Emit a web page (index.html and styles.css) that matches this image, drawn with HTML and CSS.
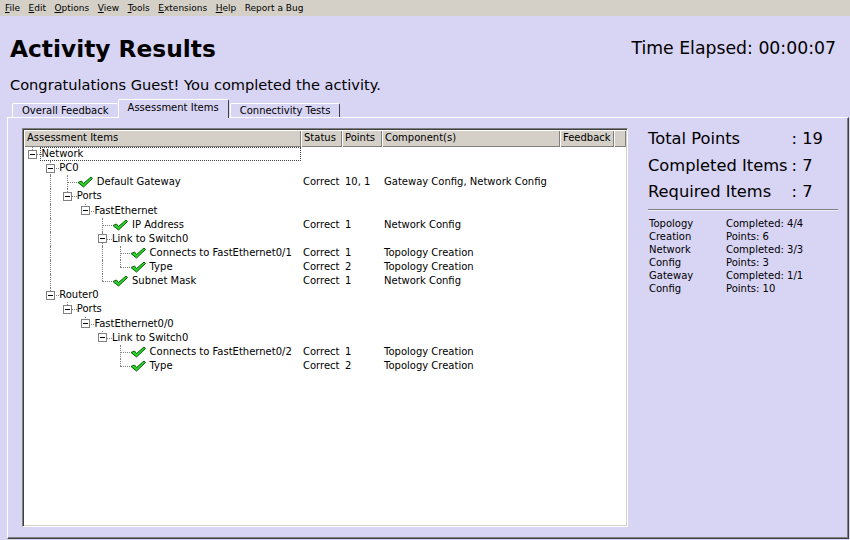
FILE: index.html
```html
<!DOCTYPE html>
<html>
<head>
<meta charset="utf-8">
<link rel="stylesheet" href="styles.css">
</head>
<body>
<div class="menubar">
  <span><u>F</u>ile</span>
  <span><u>E</u>dit</span>
  <span><u>O</u>ptions</span>
  <span><u>V</u>iew</span>
  <span><u>T</u>ools</span>
  <span><u>E</u>xtensions</span>
  <span><u>H</u>elp</span>
  <span>Report a Bug</span>
</div>

<div class="header">
  <div class="head-left">
    <h1 class="title">Activity Results</h1>
    <p class="congrats">Congratulations Guest! You completed the activity.</p>
  </div>
  <div class="time">Time Elapsed: 00:00:07</div>
</div>

<div class="tabs">
  <div class="tab">Overall Feedback</div>
  <div class="tab active">Assessment Items</div>
  <div class="tab">Connectivity Tests</div>
</div>

<div class="panel">
  <div class="tree">
    <div class="grid hd">
      <div>Assessment Items</div>
      <div>Status</div>
      <div>Points</div>
      <div>Component(s)</div>
      <div>Feedback</div>
      <div></div>
    </div>

    <div class="grid row">
      <div class="c1"><span class="g ell"><i class="box"></i></span><span class="lbl focus">Network</span></div>
      <div></div><div></div><div></div><div></div><div></div>
    </div>
    <div class="grid row">
      <div class="c1"><span class="g"></span><span class="g tee"><i class="box"></i></span><span class="lbl">PC0</span></div>
      <div></div><div></div><div></div><div></div><div></div>
    </div>
    <div class="grid row">
      <div class="c1"><span class="g"></span><span class="g pipe"></span><span class="g tee"></span><svg class="chk" viewBox="0 0 16 12"><path d="M1 6.5 L4.5 5 L6.5 7.5 L14 1 L15.5 2.5 L6.5 11 Z"/></svg><span class="lbl">Default Gateway</span></div>
      <div class="d">Correct</div><div class="d p">10, 1</div><div class="d">Gateway Config, Network Config</div><div></div><div></div>
    </div>
    <div class="grid row">
      <div class="c1"><span class="g"></span><span class="g pipe"></span><span class="g ell"><i class="box"></i></span><span class="lbl">Ports</span></div>
      <div></div><div></div><div></div><div></div><div></div>
    </div>
    <div class="grid row">
      <div class="c1"><span class="g"></span><span class="g pipe"></span><span class="g"></span><span class="g ell"><i class="box"></i></span><span class="lbl">FastEthernet</span></div>
      <div></div><div></div><div></div><div></div><div></div>
    </div>
    <div class="grid row">
      <div class="c1"><span class="g"></span><span class="g pipe"></span><span class="g"></span><span class="g"></span><span class="g tee"></span><svg class="chk" viewBox="0 0 16 12"><path d="M1 6.5 L4.5 5 L6.5 7.5 L14 1 L15.5 2.5 L6.5 11 Z"/></svg><span class="lbl">IP Address</span></div>
      <div class="d">Correct</div><div class="d p">1</div><div class="d">Network Config</div><div></div><div></div>
    </div>
    <div class="grid row">
      <div class="c1"><span class="g"></span><span class="g pipe"></span><span class="g"></span><span class="g"></span><span class="g tee"><i class="box"></i></span><span class="lbl">Link to Switch0</span></div>
      <div></div><div></div><div></div><div></div><div></div>
    </div>
    <div class="grid row">
      <div class="c1"><span class="g"></span><span class="g pipe"></span><span class="g"></span><span class="g"></span><span class="g pipe"></span><span class="g tee"></span><svg class="chk" viewBox="0 0 16 12"><path d="M1 6.5 L4.5 5 L6.5 7.5 L14 1 L15.5 2.5 L6.5 11 Z"/></svg><span class="lbl">Connects to FastEthernet0/1</span></div>
      <div class="d">Correct</div><div class="d p">1</div><div class="d">Topology Creation</div><div></div><div></div>
    </div>
    <div class="grid row">
      <div class="c1"><span class="g"></span><span class="g pipe"></span><span class="g"></span><span class="g"></span><span class="g pipe"></span><span class="g ell"></span><svg class="chk" viewBox="0 0 16 12"><path d="M1 6.5 L4.5 5 L6.5 7.5 L14 1 L15.5 2.5 L6.5 11 Z"/></svg><span class="lbl">Type</span></div>
      <div class="d">Correct</div><div class="d p">2</div><div class="d">Topology Creation</div><div></div><div></div>
    </div>
    <div class="grid row">
      <div class="c1"><span class="g"></span><span class="g pipe"></span><span class="g"></span><span class="g"></span><span class="g ell"></span><svg class="chk" viewBox="0 0 16 12"><path d="M1 6.5 L4.5 5 L6.5 7.5 L14 1 L15.5 2.5 L6.5 11 Z"/></svg><span class="lbl">Subnet Mask</span></div>
      <div class="d">Correct</div><div class="d p">1</div><div class="d">Network Config</div><div></div><div></div>
    </div>
    <div class="grid row">
      <div class="c1"><span class="g"></span><span class="g ell"><i class="box"></i></span><span class="lbl">Router0</span></div>
      <div></div><div></div><div></div><div></div><div></div>
    </div>
    <div class="grid row">
      <div class="c1"><span class="g"></span><span class="g"></span><span class="g ell"><i class="box"></i></span><span class="lbl">Ports</span></div>
      <div></div><div></div><div></div><div></div><div></div>
    </div>
    <div class="grid row">
      <div class="c1"><span class="g"></span><span class="g"></span><span class="g"></span><span class="g ell"><i class="box"></i></span><span class="lbl">FastEthernet0/0</span></div>
      <div></div><div></div><div></div><div></div><div></div>
    </div>
    <div class="grid row">
      <div class="c1"><span class="g"></span><span class="g"></span><span class="g"></span><span class="g"></span><span class="g ell"><i class="box"></i></span><span class="lbl">Link to Switch0</span></div>
      <div></div><div></div><div></div><div></div><div></div>
    </div>
    <div class="grid row">
      <div class="c1"><span class="g"></span><span class="g"></span><span class="g"></span><span class="g"></span><span class="g"></span><span class="g tee"></span><svg class="chk" viewBox="0 0 16 12"><path d="M1 6.5 L4.5 5 L6.5 7.5 L14 1 L15.5 2.5 L6.5 11 Z"/></svg><span class="lbl">Connects to FastEthernet0/2</span></div>
      <div class="d">Correct</div><div class="d p">1</div><div class="d">Topology Creation</div><div></div><div></div>
    </div>
    <div class="grid row">
      <div class="c1"><span class="g"></span><span class="g"></span><span class="g"></span><span class="g"></span><span class="g"></span><span class="g ell"></span><svg class="chk" viewBox="0 0 16 12"><path d="M1 6.5 L4.5 5 L6.5 7.5 L14 1 L15.5 2.5 L6.5 11 Z"/></svg><span class="lbl">Type</span></div>
      <div class="d">Correct</div><div class="d p">2</div><div class="d">Topology Creation</div><div></div><div></div>
    </div>
  </div>

  <div class="summary">
    <div class="stats">
      <span>Total Points</span><span>: 19</span>
      <span>Completed Items</span><span>: 7</span>
      <span>Required Items</span><span>: 7</span>
    </div>
    <div class="sep"></div>
    <div class="cats">
      <span>Topology<br>Creation</span><span>Completed: 4/4<br>Points: 6</span>
      <span>Network<br>Config</span><span>Completed: 3/3<br>Points: 3</span>
      <span>Gateway<br>Config</span><span>Completed: 1/1<br>Points: 10</span>
    </div>
  </div>
</div>
</body>
</html>
```

FILE: styles.css
```css
html, body {
  margin: 0;
  padding: 0;
}
body {
  width: 850px;
  height: 540px;
  overflow: hidden;
  background: #d8d4f4;
  font-family: "DejaVu Sans", Verdana, sans-serif;
  color: #000;
}

/* menu */
.menubar {
  height: 16px;
  background: #d4d0c8;
  display: flex;
  align-items: center;
  gap: 8.5px;
  padding-left: 5px;
  font-size: 9px;
  line-height: 16px;
}
.menubar u { text-decoration: underline; text-underline-offset: 1px; }

/* header */
.header {
  display: flex;
  justify-content: space-between;
  align-items: flex-start;
  padding: 0 14px 0 10px;
}
.title {
  margin: 19px 0 0 0;
  font-size: 23.3px;
  font-weight: bold;
  line-height: 28px;
}
.congrats {
  margin: 13px 0 0 0;
  font-size: 14.6px;
  line-height: 18px;
}
.time {
  margin-top: 22px;
  font-size: 17.3px;
  line-height: 20px;
}

/* tabs */
.tabs {
  display: flex;
  align-items: flex-start;
  margin: 5px 0 0 12px;
  height: 18px;
  font-size: 10px;
}
.tab {
  margin-top: 4px;
  padding: 0 9px;
  line-height: 13px;
  border-top: 1px solid #fff;
  border-left: 1px solid #fff;
  border-right: 1px solid #404040;
  border-radius: 2px 2px 0 0;
  background: #d8d4f4;
}
.tab:first-child { border-right: none; }
.tab:last-child { margin-left: 1px; }
.tab.active {
  margin-top: 0;
  line-height: 15px;
  padding-bottom: 3px;
  position: relative;
  z-index: 2;
}

/* panel */
.panel {
  position: relative;
  z-index: 1;
  margin-left: 7px;
  width: 842px;
  height: 422px;
  box-sizing: border-box;
  border-top: 1px solid #fff;
  border-left: 1px solid #fff;
  border-right: 1px solid #404040;
  border-bottom: 1px solid #404040;
  box-shadow: inset -1px -1px #808080;
  display: flex;
  align-items: flex-start;
}

/* tree */
.tree {
  flex: none;
  margin: 10px 0 0 14px;
  width: 606px;
  height: 399px;
  box-sizing: border-box;
  background: #fff;
  border-top: 1px solid #808080;
  border-left: 1px solid #808080;
  border-right: 1px solid #fff;
  border-bottom: 1px solid #fff;
  box-shadow: inset 1px 1px #404040, inset -1px -1px #d4d0c8;
  padding: 1px;
  font-size: 10px;
  overflow: hidden;
}
.grid {
  display: grid;
  grid-template-columns: 277px 41px 40px 178px 54px 12px;
}
.hd > div {
  background: #d4d0c8;
  height: 17px;
  line-height: 16px;
  padding-left: 3px;
  box-sizing: border-box;
  box-shadow: inset 1px 1px #fff, inset -1px -1px #808080;
  white-space: nowrap;
  overflow: hidden;
}
.row {
  height: 14.13px;
  line-height: 14px;
}
.row > div { white-space: nowrap; }
.d { padding-left: 2px; }
.d.p { padding-left: 3px; }
.c1 {
  display: flex;
  align-items: center;
  height: 14.13px;
}
.g {
  flex: none;
  width: 17.6px;
  height: 100%;
  position: relative;
  display: flex;
  align-items: center;
  padding-left: 4px;
  box-sizing: border-box;
}
.g.pipe::before,
.g.tee::before,
.g.ell::before {
  content: "";
  position: absolute;
  left: 8px;
  top: 0;
  bottom: 0;
  border-left: 1px dotted #808080;
}
.g.ell::before { bottom: 50%; }
.g.tee::after,
.g.ell::after {
  content: "";
  position: absolute;
  left: 8px;
  right: 0;
  top: 7px;
  border-top: 1px dotted #808080;
}
.box {
  width: 9px;
  height: 9px;
  box-sizing: border-box;
  border: 1px solid #808080;
  background: #fff;
  position: relative;
  z-index: 1;
  display: flex;
  align-items: center;
  justify-content: center;
}
.box::before {
  content: "";
  width: 5px;
  height: 1px;
  background: #000;
}
.chk {
  flex: none;
  width: 16px;
  height: 12px;
  margin-right: 4px;
}
.chk path {
  fill: #2ad42a;
  stroke: #0a5a0a;
  stroke-width: 1;
  stroke-linejoin: round;
}
.lbl { white-space: nowrap; }
.lbl.focus {
  flex: 1;
  height: 12px;
  line-height: 11px;
  margin-left: -2px;
  padding-left: 1px;
  border: 1px dotted #404040;
}

/* summary */
.summary {
  flex: 1;
  padding: 8px 10px 0 20px;
}
.stats {
  display: grid;
  grid-template-columns: auto auto;
  justify-content: start;
  column-gap: 4px;
  font-size: 16.3px;
  line-height: 26.5px;
}
.sep {
  margin-top: 3px;
  border-top: 1px solid #808080;
  border-bottom: 1px solid #f0eefc;
}
.cats {
  margin-top: 6px;
  padding-left: 1px;
  display: grid;
  grid-template-columns: 77px auto;
  font-size: 10px;
  line-height: 13px;
}
```
